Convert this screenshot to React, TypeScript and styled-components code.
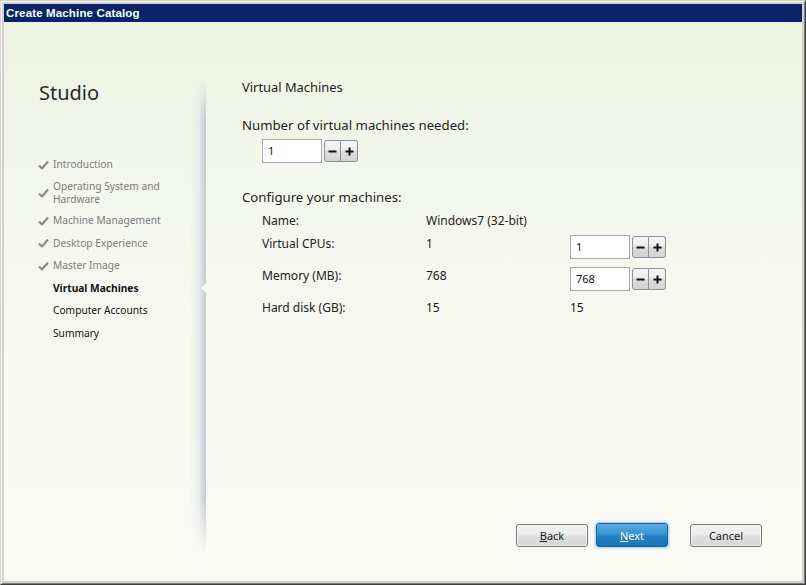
import React from "react";
import styled, { createGlobalStyle } from "styled-components";

const Global = createGlobalStyle`
  html, body { margin: 0; padding: 0; width: 806px; height: 585px; overflow: hidden; }
  body { font-family: "Noto Sans", "Open Sans", sans-serif; }
`;

const Frame = styled.div`
  width: 806px;
  height: 585px;
  box-sizing: border-box;
  border: 1px solid;
  border-color: #d4d0c8 #404040 #404040 #d4d0c8;
  background: #d4d0c8;
`;

const FrameInner = styled.div`
  height: 100%;
  box-sizing: border-box;
  border: 1px solid;
  border-color: #ffffff #808080 #808080 #ffffff;
  padding: 2px;
  display: flex;
  flex-direction: column;
`;

const TitleBar = styled.div`
  height: 18px;
  background: #0a246a;
  color: #ffffff;
  font-family: "Liberation Sans", Arial, sans-serif;
  font-weight: bold;
  font-size: 11.5px;
  letter-spacing: 0.15px;
  line-height: 18px;
  padding-left: 2px;
`;

const Body = styled.div`
  flex: 1;
  display: flex;
  background: linear-gradient(180deg, #edf3e2 0%, #f4f7ec 30%, #f9faf3 70%, #fbfbf6 100%);
  min-height: 0;
`;

const Sidebar = styled.div`
  position: relative;
  width: 202px;
  flex: none;
  padding: 58px 0 0 35px;
  box-sizing: border-box;
  &::after {
    content: "";
    position: absolute;
    top: 58px;
    bottom: 26px;
    right: 0;
    width: 16px;
    background: linear-gradient(90deg, rgba(255,255,255,0) 0%, rgba(226,229,234,0.7) 55%, #c3c8d1 100%);
    -webkit-mask-image: linear-gradient(180deg, transparent 0%, #000 8%, #000 88%, transparent 100%);
    mask-image: linear-gradient(180deg, transparent 0%, #000 8%, #000 88%, transparent 100%);
  }
`;

const Brand = styled.div`
  font-size: 20px;
  color: #2a2a2a;
  line-height: 26px;
  height: 77px;
`;

const Nav = styled.ul`
  list-style: none;
  margin: 0;
  padding: 0;
  display: flex;
  flex-direction: column;
  gap: 7.5px;
`;

const NavItem = styled.li<{ $state: "done" | "active" | "todo" }>`
  position: relative;
  display: flex;
  align-items: center;
  font-size: 10.2px;
  line-height: 13px;
  min-height: 15px;
  color: ${(p) => (p.$state === "done" ? "#7c7c7c" : "#111111")};
  font-weight: ${(p) => (p.$state === "active" ? "bold" : "normal")};
  padding-left: 14px;
  &::after {
    content: "";
    display: ${(p) => (p.$state === "active" ? "block" : "none")};
    position: absolute;
    right: 0;
    top: 50%;
    margin-top: -5px;
    border-style: solid;
    border-width: 5px 5px 5px 0;
    border-color: transparent #f6f8ef transparent transparent;
    z-index: 2;
  }
`;

const NavText = styled.span`
  width: 115px;
`;

const Check = styled.svg`
  position: absolute;
  left: -1px;
  top: 50%;
  margin-top: -5px;
`;

const Main = styled.div`
  flex: 1;
  padding: 56px 0 0 36px;
  display: flex;
  flex-direction: column;
  font-size: 12px;
  color: #1e1e1e;
`;

const Heading = styled.div`
  font-size: 12.9px;
  line-height: 18px;
  height: 38px;
`;

const SectionLabel = styled.div<{ $mt?: number }>`
  font-size: 13.2px;
  line-height: 18px;
  margin-top: ${(p) => p.$mt ?? 0}px;
`;

const SpinRow = styled.div<{ $indent?: number; $mt?: number }>`
  display: flex;
  align-items: center;
  gap: 2px;
  margin-left: ${(p) => p.$indent ?? 0}px;
  margin-top: ${(p) => p.$mt ?? 0}px;
`;

const NumInput = styled.div`
  width: 60px;
  height: 24px;
  box-sizing: border-box;
  border: 1px solid #a9a9a9;
  background: #ffffff;
  font-size: 11px;
  line-height: 22px;
  padding-left: 5px;
  color: #111;
`;

const SpinGroup = styled.div`
  display: flex;
  height: 22px;
`;

const SpinButton = styled.div<{ $pos: "l" | "r" }>`
  width: 17px;
  height: 22px;
  box-sizing: border-box;
  border: 1px solid #8f9092;
  border-left-width: ${(p) => (p.$pos === "r" ? 0 : 1)}px;
  border-radius: ${(p) => (p.$pos === "l" ? "3px 0 0 3px" : "0 3px 3px 0")};
  background: linear-gradient(180deg, #f6f6f6 0%, #ebebeb 50%, #dddddd 51%, #d3d3d3 100%);
  display: flex;
  align-items: center;
  justify-content: center;
`;

const Grid = styled.div`
  display: grid;
  grid-template-columns: 164px 144px auto;
  grid-template-rows: 23px 32px 32px 32px;
  margin-left: 20px;
  margin-top: 6px;
  font-size: 12px;
  line-height: 18px;
  color: #222;
`;

const Cell = styled.div`
  display: flex;
  align-items: flex-start;
`;

const Footer = styled.div`
  margin-top: auto;
  margin-bottom: 34px;
  display: flex;
  align-items: center;
  padding-left: 274px;
`;

const Btn = styled.button<{ $primary?: boolean; $gap?: number }>`
  width: 72px;
  height: ${(p) => (p.$primary ? 24 : 23)}px;
  margin-left: ${(p) => p.$gap ?? 0}px;
  box-sizing: border-box;
  border: 1px solid ${(p) => (p.$primary ? "#1d5f8e" : "#7a7a7a")};
  border-radius: 3px;
  font-family: "Noto Sans", "Open Sans", sans-serif;
  font-size: 11px;
  padding: 0;
  color: ${(p) => (p.$primary ? "#ffffff" : "#1a1a1a")};
  background: ${(p) =>
    p.$primary
      ? "linear-gradient(180deg, #58aee2 0%, #3a94d0 45%, #2381c2 55%, #1c74b4 100%)"
      : "linear-gradient(180deg, #f4f4f4 0%, #ebebeb 45%, #dedede 55%, #d6d6d6 100%)"};
  box-shadow: ${(p) => (p.$primary ? "0 0 3px 1px rgba(80,160,220,0.55)" : "inset 0 0 0 1px rgba(255,255,255,0.6)")};
  u { text-decoration: underline; }
`;

const Minus = () => (
  <svg width="9" height="9" viewBox="0 0 9 9"><rect x="0.5" y="3.5" width="8" height="2" fill="#111" /></svg>
);
const Plus = () => (
  <svg width="9" height="9" viewBox="0 0 9 9"><rect x="0.5" y="3.5" width="8" height="2" fill="#111" /><rect x="3.5" y="0.5" width="2" height="8" fill="#111" /></svg>
);

const Spinner = ({ value }: { value: string }) => (
  <>
    <NumInput>{value}</NumInput>
    <SpinGroup>
      <SpinButton $pos="l"><Minus /></SpinButton>
      <SpinButton $pos="r"><Plus /></SpinButton>
    </SpinGroup>
  </>
);

const CheckMark = () => (
  <Check width="11" height="10" viewBox="0 0 11 10">
    <path d="M1 5.5 L4 8.5 L10 1.5" fill="none" stroke="#8a8a8a" strokeWidth="2.2" strokeLinejoin="round" />
  </Check>
);

const steps: { label: string; state: "done" | "active" | "todo" }[] = [
  { label: "Introduction", state: "done" },
  { label: "Operating System and Hardware", state: "done" },
  { label: "Machine Management", state: "done" },
  { label: "Desktop Experience", state: "done" },
  { label: "Master Image", state: "done" },
  { label: "Virtual Machines", state: "active" },
  { label: "Computer Accounts", state: "todo" },
  { label: "Summary", state: "todo" },
];

export default function App() {
  return (
    <>
      <Global />
      <Frame>
        <FrameInner>
          <TitleBar>Create Machine Catalog</TitleBar>
          <Body>
            <Sidebar>
              <Brand>Studio</Brand>
              <Nav>
                {steps.map((s) => (
                  <NavItem key={s.label} $state={s.state}>
                    {s.state === "done" && <CheckMark />}
                    <NavText>{s.label}</NavText>
                  </NavItem>
                ))}
              </Nav>
            </Sidebar>
            <Main>
              <Heading>Virtual Machines</Heading>
              <SectionLabel>Number of virtual machines needed:</SectionLabel>
              <SpinRow $indent={20} $mt={5}>
                <Spinner value="1" />
              </SpinRow>
              <SectionLabel $mt={25}>Configure your machines:</SectionLabel>
              <Grid>
                <Cell>Name:</Cell>
                <Cell>Windows7 (32-bit)</Cell>
                <Cell></Cell>
                <Cell>Virtual CPUs:</Cell>
                <Cell>1</Cell>
                <Cell><SpinRow><Spinner value="1" /></SpinRow></Cell>
                <Cell>Memory (MB):</Cell>
                <Cell>768</Cell>
                <Cell><SpinRow><Spinner value="768" /></SpinRow></Cell>
                <Cell>Hard disk (GB):</Cell>
                <Cell>15</Cell>
                <Cell>15</Cell>
              </Grid>
              <Footer>
                <Btn><u>B</u>ack</Btn>
                <Btn $primary $gap={8}><u>N</u>ext</Btn>
                <Btn $gap={22}>Cancel</Btn>
              </Footer>
            </Main>
          </Body>
        </FrameInner>
      </Frame>
    </>
  );
}
